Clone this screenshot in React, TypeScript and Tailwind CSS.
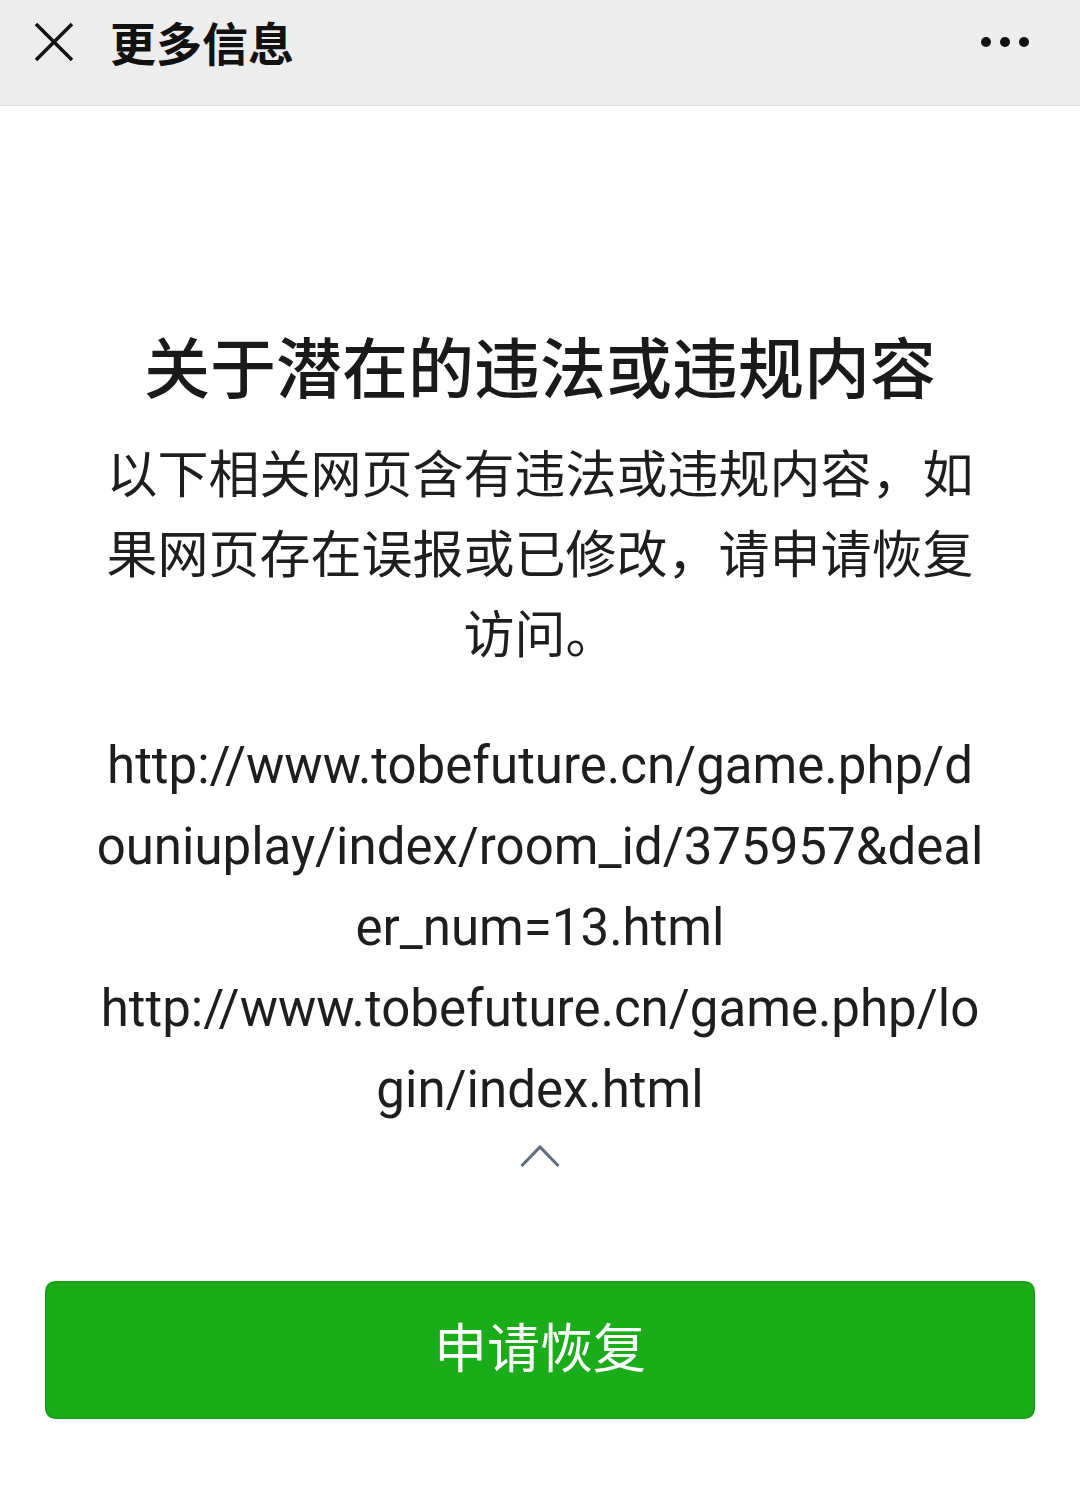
import React from "react";

export default function App() {
  const font = { fontFamily: 'Roboto, "Noto Sans CJK SC", sans-serif' };
  return (
    <div className="w-[1080px] min-h-[1491px] bg-white flex flex-col" style={font}>
      <div className="h-[106px] bg-[#ededed] border-b border-[#dedede] flex items-center relative">
        <svg width="40" height="40" viewBox="0 0 40 40" className="ml-[34px] mt-[-22px]">
          <path d="M2 2 L38 38 M38 2 L2 38" stroke="#111" strokeWidth="3.5" fill="none" />
        </svg>
        <div className="ml-[36px] mt-[-24px] text-[46px] font-bold text-[#111] leading-none" style={{ fontFamily: '"Noto Sans CJK SC", sans-serif' }}>
          更多信息
        </div>
        <div className="ml-auto mr-[51px] mt-[-22px] flex gap-[9px]">
          <span className="w-[10px] h-[10px] rounded-full bg-[#111]" />
          <span className="w-[10px] h-[10px] rounded-full bg-[#111]" />
          <span className="w-[10px] h-[10px] rounded-full bg-[#111]" />
        </div>
      </div>

      <div className="px-[96px] pt-[213px] flex flex-col items-center text-center">
        <div className="text-[66px] font-medium leading-[90px] text-[#1a1a1a] whitespace-nowrap" style={{ fontFamily: '"Noto Sans CJK SC", sans-serif' }}>
          关于潜在的违法或违规内容
        </div>
        <div className="mt-[22px] text-[51px] leading-[80px] text-[#1e1e1e]" style={{ fontFamily: '"Noto Sans CJK SC", sans-serif' }}>
          以下相关网页含有违法或违规内容，如<br />
          果网页存在误报或已修改，请申请恢复<br />
          访问。
        </div>
        <div className="mt-[54px] text-[51px] leading-[81px] text-[#1e1e1e] whitespace-nowrap">
          http://www.tobefuture.cn/game.php/d<br />
          ouniuplay/index/room_id/375957&amp;deal<br />
          er_num=13.html<br />
          http://www.tobefuture.cn/game.php/lo<br />
          gin/index.html
        </div>
        <svg width="40" height="24" viewBox="0 0 40 24" className="mt-[14px]">
          <path d="M1.5 22 L20 3 L38.5 22" stroke="#5e6b80" strokeWidth="3" fill="none" />
        </svg>
      </div>

      <div className="px-[45px] mt-[113px]">
        <div className="h-[138px] w-[990px] rounded-[10px] bg-[#1aad19] border-2 border-[#18a017] flex items-center justify-center text-white text-[53px] pb-[8px]" style={{ fontFamily: '"Noto Sans CJK SC", sans-serif' }}>
          申请恢复
        </div>
      </div>
    </div>
  );
}
